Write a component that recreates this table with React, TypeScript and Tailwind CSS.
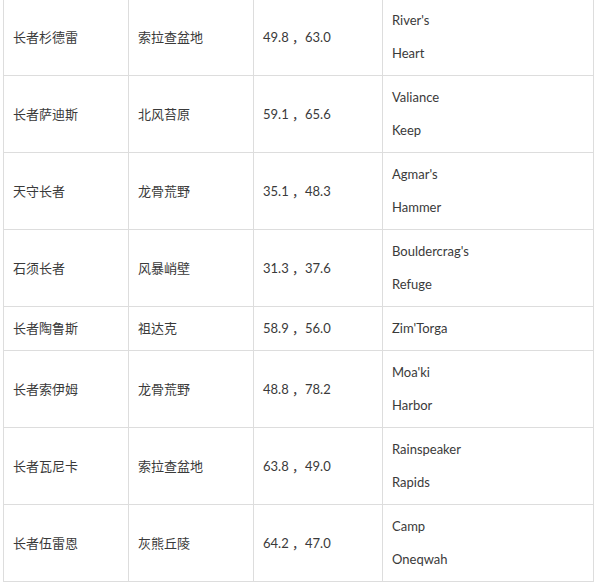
const rows: [string, string, string, string[]][] = [
  ['长者杉德雷', '索拉查盆地', '49.8 ，63.0', ["River's", 'Heart']],
  ['长者萨迪斯', '北风苔原', '59.1 ，65.6', ['Valiance', 'Keep']],
  ['天守长者', '龙骨荒野', '35.1 ，48.3', ["Agmar's", 'Hammer']],
  ['石须长者', '风暴峭壁', '31.3 ，37.6', ["Bouldercrag's", 'Refuge']],
  ['长者陶鲁斯', '祖达克', '58.9 ，56.0', ["Zim'Torga"]],
  ['长者索伊姆', '龙骨荒野', '48.8 ，78.2', ["Moa'ki", 'Harbor']],
  ['长者瓦尼卡', '索拉查盆地', '63.8 ，49.0', ['Rainspeaker', 'Rapids']],
  ['长者伍雷恩', '灰熊丘陵', '64.2 ，47.0', ['Camp', 'Oneqwah']],
]

export default function App() {
  return (
    <div className="bg-white w-[598px] h-[582px] overflow-hidden pl-[3px]">
      <table
        className="-mt-[2px] w-[590px] table-fixed border-collapse text-[13px] leading-[33px] text-[#3a3a3a]"
        style={{ fontFamily: 'Lato, "Noto Sans CJK SC", sans-serif' }}
      >
        <colgroup>
          <col className="w-[125px]" />
          <col className="w-[125px]" />
          <col className="w-[129px]" />
          <col className="w-[211px]" />
        </colgroup>
        <tbody>
          {rows.map((r) => (
            <tr key={r[0]}>
              <td className="border border-[#dddddd] px-[9px] py-[5px] align-middle">{r[0]}</td>
              <td className="border border-[#dddddd] px-[9px] py-[5px] align-middle">{r[1]}</td>
              <td className="border border-[#dddddd] px-[9px] py-[5px] align-middle whitespace-pre">{r[2]}</td>
              <td className="border border-[#dddddd] px-[9px] py-[5px] align-middle">
                {r[3].map((line) => (
                  <div key={line}>{line}</div>
                ))}
              </td>
            </tr>
          ))}
        </tbody>
      </table>
    </div>
  )
}
